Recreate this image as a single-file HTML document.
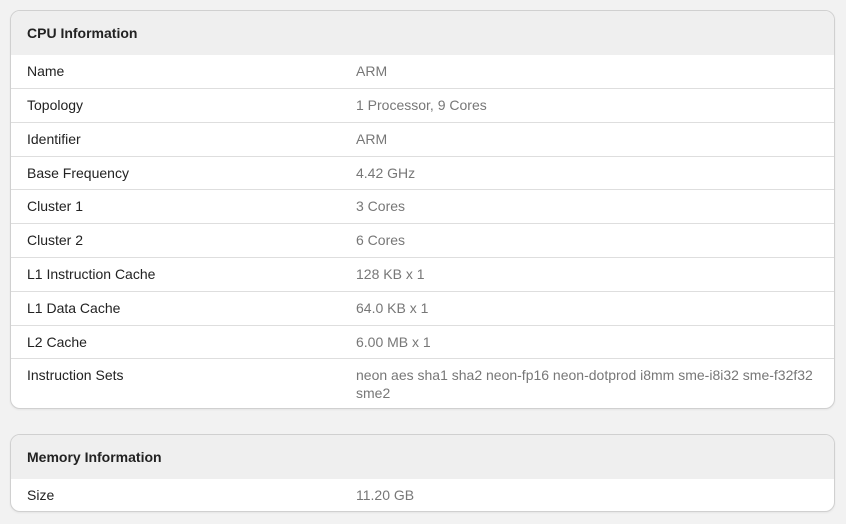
<!DOCTYPE html>
<html><head><style>
body{margin:0;background:#f2f2f2;font-family:"Liberation Sans",Arial,sans-serif;font-size:14px;width:846px;height:524px;overflow:hidden;position:relative}
.card{position:absolute;left:10px;width:823px;background:#fff;border:1px solid #d0d0d0;border-radius:10px;overflow:hidden;box-shadow:0 1px 2px rgba(0,0,0,.06)}
.hd{height:44px;background:#efefef;font-weight:bold;color:#222;padding-left:16px;line-height:45px;font-size:14px}
.row{display:flex;border-top:1px solid #dedede;height:32.8px;line-height:33px;color:#222}
.l{width:329px;padding-left:16px;flex:none}
.v{color:#777;width:460px}
.tall{height:49px;line-height:18px}
.tall .l,.tall .v{padding-top:7px}
</style></head><body>
<div class="card" style="top:10px">
<div class="hd">CPU Information</div>
<div class="row" style="border-top:none;height:33px;line-height:33px"><div class="l">Name</div><div class="v">ARM</div></div>
<div class="row"><div class="l">Topology</div><div class="v">1 Processor, 9 Cores</div></div>
<div class="row"><div class="l">Identifier</div><div class="v">ARM</div></div>
<div class="row"><div class="l">Base Frequency</div><div class="v">4.42 GHz</div></div>
<div class="row"><div class="l">Cluster 1</div><div class="v">3 Cores</div></div>
<div class="row"><div class="l">Cluster 2</div><div class="v">6 Cores</div></div>
<div class="row"><div class="l">L1 Instruction Cache</div><div class="v">128 KB x 1</div></div>
<div class="row"><div class="l">L1 Data Cache</div><div class="v">64.0 KB x 1</div></div>
<div class="row"><div class="l">L2 Cache</div><div class="v">6.00 MB x 1</div></div>
<div class="row tall"><div class="l">Instruction Sets</div><div class="v">neon aes sha1 sha2 neon-fp16 neon-dotprod i8mm sme-i8i32 sme-f32f32 sme2</div></div>
</div>
<div class="card" style="top:434px">
<div class="hd">Memory Information</div>
<div class="row" style="border-top:none;height:32px;line-height:32px"><div class="l">Size</div><div class="v">11.20 GB</div></div>
</div>
</body></html>
